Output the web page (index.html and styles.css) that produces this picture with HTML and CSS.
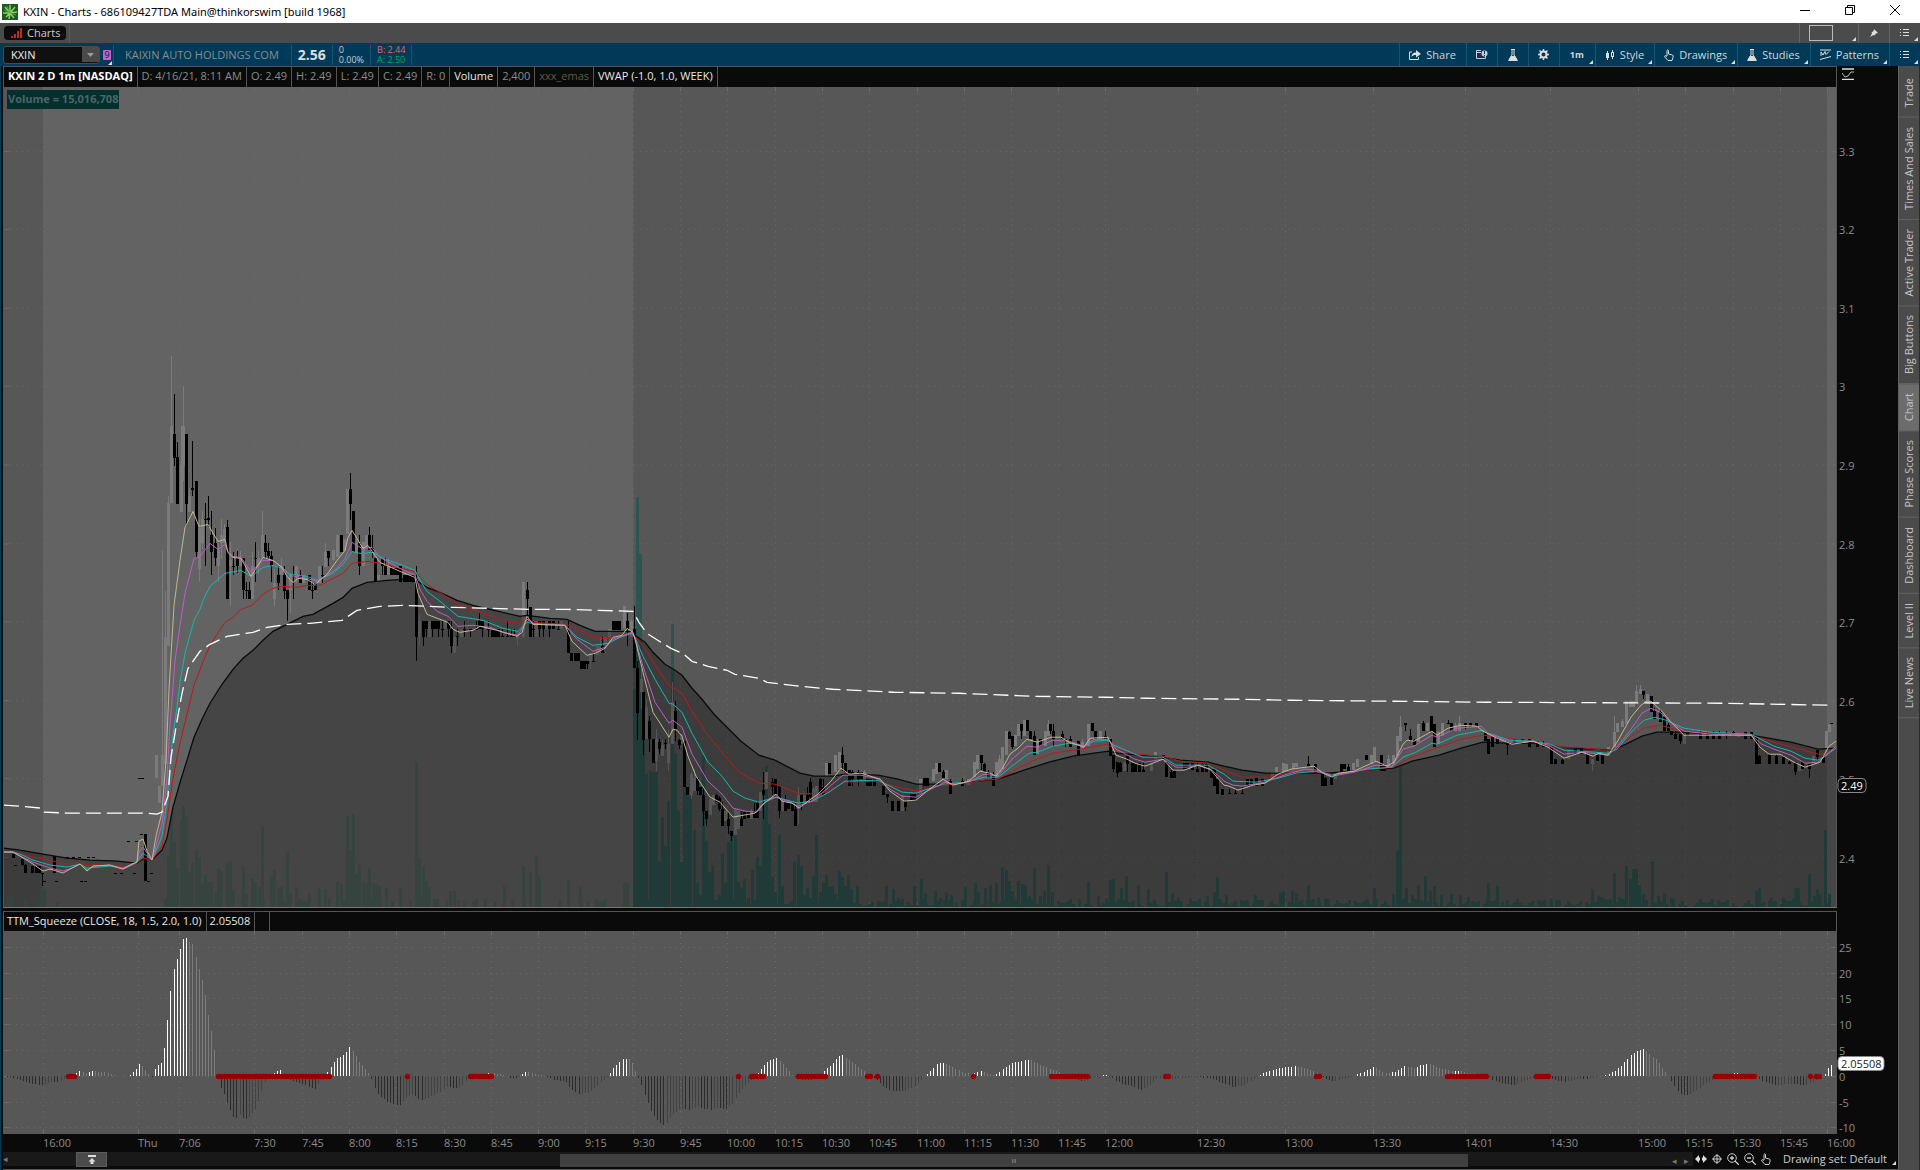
FILE: index.html
```html
<!DOCTYPE html>
<html lang="en">
<head>
<meta charset="utf-8">
<title>KXIN - Charts</title>
<link rel="stylesheet" href="styles.css">
</head>
<body>
<header class="titlebar">
	<svg class="app-icon" width="16" height="16" viewBox="0 0 16 16">
		<rect width="16" height="16" fill="#1c5a1e"/>
		<path d="M8 9L3 3M8 9L8 1M8 9L13 3M8 9L1 9M8 9L15 8M8 9L4 13M8 9L12 14M8 9L7 15" stroke="#8fd06a" stroke-width="1.5" fill="none"/>
		<path d="M8 9L5 2M8 9L14 11M8 9L2 6" stroke="#4da33f" stroke-width="1" fill="none"/>
	</svg>
	<h1>KXIN - Charts - 686109427TDA Main@thinkorswim [build 1968]</h1>
	<div class="winbtns">
		<button aria-label="Minimize"><svg width="10" height="10"><path d="M0 5.5H10" stroke="#000"/></svg></button>
		<button aria-label="Restore"><svg width="10" height="10"><path d="M.5 2.5H7.5V9.5H.5ZM2.5 2.5V.5H9.5V7.5H7.5" stroke="#000" fill="none"/></svg></button>
		<button aria-label="Close"><svg width="10" height="10"><path d="M0 0L10 10M10 0L0 10" stroke="#000"/></svg></button>
	</div>
</header>

<nav class="tabbar">
	<button class="tab">
		<svg width="11" height="10"><path d="M1 10V8M4 10V6M7 10V3M10 10V0" stroke="#c02a2a" stroke-width="2"/></svg>
		Charts
	</button>
	<span class="fill"></span>
	<button class="tb grid-btn corner" aria-label="Grid layout"><span class="layout-box"></span></button>
	<button class="tb pin-btn" aria-label="Pin"><svg width="8" height="8"><path d="M4 0L8 4L6 4.500L4.500 6.500L3.500 6L0 8L2 4.500L1.500 3.500L3.500 2Z" fill="#ddd"/></svg></button>
	<button class="tb menu-btn corner" aria-label="Menu"><svg width="9" height="8"><path d="M0 .5H1M3 .5H9M0 3.500H1M3 3.500H9M0 6.500H1M3 6.500H9" stroke="#ddd"/></svg></button>
</nav>

<section class="toolbar">
	<div class="symbol">
		<input type="text" value="KXIN" aria-label="Symbol">
		<button aria-label="Symbol list"><svg width="7" height="4"><path d="M0 0H7L3.500 4Z" fill="#999"/></svg></button>
	</div>
	<button class="link corner" aria-label="Link 9">9</button>
	<span class="company">KAIXIN AUTO HOLDINGS COM</span>
	<span class="last">2.56</span>
	<span class="two"><span>0</span><span>0.00%</span></span>
	<span class="two ba"><span class="bid">B: 2.44</span><span class="ask">A: 2.50</span></span>
	<span class="fill"></span>
	<button class="tb"><svg width="12" height="10"><path d="M3 2H.5V9.500H9.500V7" stroke="#ddd" fill="none"/><path d="M2.500 7C2.500 4 4 2.500 7 2.500V0L12 4L7 7.500V5C5 5 3.500 5.500 2.500 7Z" fill="#ddd"/></svg>Share</button>
	<button class="tb ico" aria-label="Detach"><svg width="12" height="9"><path d="M5 .5H.5V8.500H9.500V6M.5 2.500H5" stroke="#ccc" fill="none"/><circle cx="8.500" cy="3.500" r="3" fill="#ccc"/><path d="M8.500 1V4M8.500 5V6" stroke="#003a59"/></svg></button>
	<button class="tb ico" aria-label="Edit studies"><svg width="10" height="12"><path d="M3 .5H7M4 1V6L1 10.500H9L6 6V1" stroke="#ddd" fill="none"/><path d="M3 7H7L10 12H0Z" fill="#ddd"/></svg></button>
	<button class="tb ico" aria-label="Settings"><svg width="11" height="11"><circle cx="5.500" cy="5.500" r="3" stroke="#ddd" stroke-width="2" fill="none"/><path d="M5.500 0V2M5.500 9V11M0 5.500H2M9 5.500H11M1.500 1.500L3 3M8 8L9.500 9.500M9.500 1.500L8 3M3 8L1.500 9.500" stroke="#ddd" stroke-width="1.500"/></svg></button>
	<button class="tb tf corner">1m</button>
	<button class="tb corner"><svg width="10" height="10"><path d="M2.500 1V10M7.500 0V9" stroke="#ddd"/><rect x="1" y="3" width="3" height="5" fill="#ddd"/><rect x="6.500" y="2.500" width="2" height="4" fill="#003a59" stroke="#ddd"/></svg>Style</button>
	<button class="tb corner"><svg width="10" height="12" viewBox="0 0 10 12"><path d="M3 7V1.500Q3.500 .5 4.500 1.500V5L8.500 6Q9.500 6.500 9 8.500L8 11.500H4L.8 8Q.5 6.500 1.500 6.500L3 7.500" stroke="#ddd" fill="none"/></svg>Drawings</button>
	<button class="tb corner"><svg width="10" height="12"><path d="M3 .5H7M4 1V6L1 10.500H9L6 6V1" stroke="#ddd" fill="none"/><path d="M3 7H7L10 12H0Z" fill="#ddd"/></svg>Studies</button>
	<button class="tb corner"><svg width="11" height="11"><path d="M0 1H11M0 10.500L11 7.500M1 7V3L3 6L5 2.500L6 5.500L9 2.500" stroke="#ddd" fill="none"/></svg>Patterns</button>
	<button class="tb menu-btn corner" aria-label="Menu"><svg width="9" height="8"><path d="M0 .5H1M3 .5H9M0 3.500H1M3 3.500H9M0 6.500H1M3 6.500H9" stroke="#ddd"/></svg></button>
</section>

<main class="main">
	<div class="charts">
		<div class="row head">
			<div class="cells">
				<b>KXIN 2 D 1m [NASDAQ]</b>
				<span>D: 4/16/21, 8:11 AM</span>
				<span>O: 2.49</span>
				<span>H: 2.49</span>
				<span>L: 2.49</span>
				<span>C: 2.49</span>
				<span>R: 0</span>
				<span class="on">Volume</span>
				<span>2,400</span>
				<span class="emas">xxx_emas</span>
				<span class="on">VWAP (-1.0, 1.0, WEEK)</span>
			</div>
			<div class="axis">
				<svg class="scale-icon" width="12" height="12"><path d="M0 1H12M0 11.500H12" stroke="#ddd" stroke-width="1.500"/><path d="M0 5L3 9L6 8L9 4H12" stroke="#bbb" fill="none"/></svg>
			</div>
		</div>
		<div class="row price">
			<div class="plot">
				<svg id="priceChart" viewBox="4 87 1832 821" preserveAspectRatio="none"></svg>
				<span class="vol-label">Volume = 15,016,708</span>
			</div>
			<svg id="priceAxis" class="axis"></svg>
		</div>
		<div class="row head study-head">
			<div class="cells">
				<span class="on">TTM_Squeeze (CLOSE, 18, 1.5, 2.0, 1.0)</span>
				<span class="on">2.05508</span>
				<span class="blank"></span>
			</div>
			<div class="axis"></div>
		</div>
		<div class="row study">
			<div class="plot"><svg id="studyChart" viewBox="4 931 1832 203" preserveAspectRatio="none"></svg></div>
			<svg id="studyAxis" class="axis"></svg>
		</div>
		<div class="row times"><svg id="timeAxis"></svg><div class="axis"></div></div>
		<div class="bottom">
			<div class="track">
				<button class="arrow" aria-label="Scroll left">◂</button>
				<button class="to-top" aria-label="Collapse"><svg width="8" height="9"><path d="M0 1H8" stroke="#ddd" stroke-width="2"/><path d="M4 3L7.500 6.500H5.500V9H2.500V6.500H.5Z" fill="#ddd"/></svg></button>
				<div class="rail"><span></span><div class="thumb"><i></i></div><span class="arrows">◂ <em>▸</em></span></div>
			</div>
			<div class="tools">
				<button aria-label="Expand"><svg width="12" height="8"><path d="M0 4L4 0V2.500H5V5.500H4V8ZM12 4L8 0V2.500H7V5.500H8V8Z" fill="#ddd"/></svg></button>
				<button aria-label="Crosshair"><svg width="10" height="10"><circle cx="5" cy="5" r="3.500" stroke="#ccc" fill="none"/><path d="M5 0V10M0 5H10" stroke="#ccc"/></svg></button>
				<button aria-label="Zoom in"><svg width="12" height="12"><circle cx="5" cy="5" r="4.300" stroke="#ccc" fill="none"/><path d="M8 8L12 12M5 3V7M3 5H7" stroke="#ccc" stroke-width="1.300"/></svg></button>
				<button aria-label="Zoom out"><svg width="12" height="12"><circle cx="5" cy="5" r="4.300" stroke="#ccc" fill="none"/><path d="M8 8L12 12M3 5H7" stroke="#ccc" stroke-width="1.300"/></svg></button>
				<button aria-label="Pan"><svg width="10" height="12" viewBox="0 0 10 12"><path d="M3 7V1.500Q3.500 .5 4.500 1.500V5L8.500 6Q9.500 6.500 9 8.500L8 11.500H4L.8 8Q.5 6.500 1.500 6.500L3 7.500" stroke="#ccc" fill="none"/></svg></button>
				<button class="set corner">Drawing set: Default</button>
			</div>
		</div>
	</div>
	<aside class="gadgets">
		<button>Trade</button>
		<button>Times And Sales</button>
		<button>Active Trader</button>
		<button>Big Buttons</button>
		<button class="active">Chart</button>
		<button>Phase Scores</button>
		<button>Dashboard</button>
		<button>Level II</button>
		<button>Live News</button>
	</aside>
</main>
<script src="chart.js"></script>
</body>
</html>
```

FILE: styles.css
```css
* { box-sizing: border-box; }
body {
	margin: 0;
	height: 100vh;
	display: flex;
	flex-direction: column;
	overflow: hidden;
	background: #0a0a0a;
	color: #8c8c8c;
	font: 11px/16px "Open Sans", "Noto Sans", sans-serif;
}
button, input {
	margin: 0;
	padding: 0;
	border: 0;
	background: none;
	font: inherit;
	color: inherit;
}
button { cursor: pointer; white-space: nowrap; }
svg { display: block; flex: none; }
.fill { flex: 1; }

.titlebar {
	display: flex;
	align-items: center;
	height: 23px;
	flex: none;
	background: #fff;
	color: #000;
	padding: 0 3px 0 2px;
}
.titlebar h1 {
	margin: 0 auto 0 5px;
	font-family: "Noto Sans", "Open Sans", sans-serif;
	font-size: 11px;
	font-weight: normal;
}
.winbtns { display: flex; }
.winbtns button {
	width: 45px;
	height: 23px;
	display: flex;
	align-items: center;
	justify-content: center;
	padding-bottom: 3px;
}

.tabbar {
	display: flex;
	align-items: center;
	height: 20px;
	flex: none;
	background: #4b4b4b;
	padding-left: 4px;
	color: #ccc;
}
.tabbar .fill {
	align-self: stretch;
	margin-left: 3px;
	border-left: 1px solid #5a5a5a;
}
.tab {
	display: flex;
	align-items: center;
	gap: 5px;
	height: 14px;
	padding: 0 6px 0 7px;
	border-radius: 4px;
	background: #0c0c0c;
}
.tb {
	position: relative;
	display: flex;
	align-items: center;
	justify-content: center;
	gap: 5px;
	align-self: stretch;
	padding: 0 10px 0 9px;
	border-left: 1px solid #1c5373;
	color: #d4d4d4;
}
.tabbar .tb { border-color: #636363; }
.grid-btn { width: 59px; justify-content: flex-start; }
.layout-box { width: 24px; height: 16px; border: 1px solid #bbb; }
.pin-btn, .menu-btn { width: 31px; }
.ico { width: 31px; padding: 0; }
.tf { width: 36px; font-size: 9px; font-weight: bold; }
.corner { position: relative; }
.corner::after {
	content: "";
	position: absolute;
	right: 2px;
	bottom: 2px;
	border: 2px solid transparent;
	border-right-color: #ddd;
	border-bottom-color: #ddd;
}

.toolbar {
	display: flex;
	align-items: center;
	height: 23px;
	flex: none;
	padding: 0 0 0 3px;
	background: #003a59;
}
.symbol {
	display: flex;
	align-items: center;
	width: 97px;
	height: 18px;
	border: 1px solid #4a4a4a;
	border-radius: 3px;
	background: #101010;
	color: #eee;
}
.symbol input { flex: 1; min-width: 0; height: 14px; padding-left: 7px; }
.symbol button {
	display: flex;
	align-items: center;
	justify-content: center;
	width: 17px;
	height: 15px;
	background: #4a4a4a;
}
.link {
	width: 8px;
	height: 10px;
	margin: 0 2px 0 3px;
	border-radius: 1px;
	background: #c65fd0;
	color: #222;
	font-size: 9px;
	line-height: 10px;
}
.link::after { right: -1px; bottom: -5px; }
.company, .last, .two {
	display: flex;
	align-items: center;
	height: 20px;
	border-left: 1px solid #1c5373;
}
.company { padding: 0 12px 0 11px; }
.last { padding: 0 6px; color: #ddd; font-size: 14px; font-weight: bold; }
.two {
	flex-direction: column;
	align-items: flex-start;
	justify-content: center;
	padding: 0 6px;
	color: #ccc;
	font-size: 9px;
	line-height: 10px;
}
.ba { border-right: 1px solid #1c5373; }
.bid { color: #f0606a; }
.ask { color: #00b050; }

.main { flex: 1; min-height: 0; display: flex; border-left: 1px solid #003a59; }
.charts { flex: 1; min-width: 0; display: flex; flex-direction: column; padding-left: 2px; }
.row { display: flex; flex: none; }
.axis { width: 61px; flex: none; overflow: visible; }
.plot, .cells { flex: 1; min-width: 0; border: solid #555; border-width: 0 1px; }
.cells {
	display: flex;
	height: 20px;
	border-top-width: 1px;
}
.cells > * {
	padding: 1px 4px 0 3px;
	border-right: 1px solid #555;
	white-space: nowrap;
}
.head:first-child .cells { height: 21px; }
.head:first-child .cells > * { padding-left: 4px; }
.cells b { color: #fff; }
.cells .on { color: #e8e8e8; }
.cells .emas { color: #605b45; }
.cells .blank { width: 15px; }
.scale-icon { margin: 2px 0 0 5px; }
.price { flex: 821 1 0; min-height: 0; }
.study { flex: 203 1 0; min-height: 0; }
.plot { position: relative; }
.plot svg { width: 100%; height: 100%; }
.price .plot { border-bottom: 1px solid #777; }
.study-head { margin-top: 3px; }
.vol-label {
	position: absolute;
	left: 3px;
	top: 3px;
	padding: 1px 1px 2px;
	background: #03302e;
	color: #4d6663;
	font-weight: bold;
}
.axis text, #timeAxis text { fill: #8c8c8c; }
.axis text.lit { fill: #fff; }
.axis text.dark { fill: #222; }
.times { height: 18px; padding-left: 1px; }
#timeAxis { flex: 1; height: 18px; margin-right: 1px; overflow: visible; }

.bottom { display: flex; height: 18px; flex: none; padding-bottom: 3px; border-bottom: 1px solid #555; }
.track { display: flex; flex: 1; align-items: center; background: #191919; }
.arrow { width: 73px; text-align: left; font-size: 9px; color: #777; }
.to-top {
	display: flex;
	align-items: center;
	justify-content: center;
	width: 31px;
	height: 15px;
	border: 1px solid #5c5c5c;
	background: #4b4b4b;
}
.rail {
	flex: 1;
	display: grid;
	grid-template-columns: 453fr 908fr 225fr;
	height: 13px;
	align-items: center;
}
.thumb { display: flex; justify-content: center; align-items: center; height: 13px; background: #404040; }
.thumb i { width: 4px; height: 4px; border: 1px solid #707070; border-width: 0 1px; background: #5a5a5a; }
.arrows { justify-self: end; padding-right: 4px; font-size: 9px; color: #777; }
.arrows em { font-style: normal; margin-left: 5px; }
.tools { display: flex; align-items: center; gap: 5px; padding-left: 2px; color: #ccc; }
.set { margin-left: 7px; padding-right: 11px; }

.gadgets {
	display: flex;
	flex-direction: column;
	width: 22px;
	flex: none;
	padding-top: 3px;
	background: #4b4b4b;
	border-left: 1px solid #636363;
	border-right: 1px solid #003a59;
}
.gadgets button {
	writing-mode: vertical-rl;
	transform: rotate(180deg);
	padding: 9px 0;
	border-top: 1px solid #636363;
	line-height: 20px;
	color: #c4c4c4;
}
.gadgets .active { background: #6c6c6c; }
```

FILE: chart.js
```js
var NS = "http://www.w3.org/2000/svg";
function add(parent, tag, attrs, text) {
	var el = document.createElementNS(NS, tag);
	for (var k in attrs) el.setAttribute(k, attrs[k]);
	if (text) el.textContent = text;
	parent.appendChild(el);
	return el;
}
function byId(id) { return document.getElementById(id); }
function nums(s) { return s.trim().split(/[\s,]+/).map(Number); }
function pairs(s) {
	var n = nums(s), out = [];
	for (var i = 0; i < n.length; i += 2) out.push([n[i], n[i + 1]]);
	return out;
}
function rect(p, x, y, w, h, fill) {
	add(p, "rect", {x: x, y: y, width: w, height: h, fill: fill, "shape-rendering": "crispEdges"});
}

var times = [[43, "16:00"], [138, "Thu"], [179, "7:06"], [254, "7:30"], [302, "7:45"], [349, "8:00"], [396, "8:15"],
	[444, "8:30"], [491, "8:45"], [538, "9:00"], [585, "9:15"], [633, "9:30"], [680, "9:45"], [727, "10:00"],
	[775, "10:15"], [822, "10:30"], [869, "10:45"], [917, "11:00"], [964, "11:15"], [1011, "11:30"], [1058, "11:45"],
	[1105, "12:00"], [1197, "12:30"], [1285, "13:00"], [1373, "13:30"], [1465, "14:01"], [1550, "14:30"],
	[1638, "15:00"], [1685, "15:15"], [1733, "15:30"], [1780, "15:45"], [1827, "16:00"]];
var prices = [["3.3", 152], ["3.2", 230], ["3.1", 309], ["3", 387], ["2.9", 466], ["2.8", 545], ["2.7", 623], ["2.6", 702], ["2.5", 780], ["2.4", 859]];
var levels = [["25", 948], ["20", 974], ["15", 999], ["10", 1025], ["5", 1051], ["0", 1077], ["-5", 1103], ["-10", 1128]];

function grid(p, rows, top, bottom) {
	times.forEach(function (t) {
		add(p, "path", {d: "M" + (t[0] + .5) + " " + top + "V" + bottom, stroke: "#6c6c6c", "stroke-dasharray": "1 5"});
		add(p, "path", {d: "M" + (t[0] + .5) + " " + top + "v4M" + (t[0] + .5) + " " + bottom + "v-4", stroke: "#6c6c6c"});
	});
	rows.forEach(function (r) {
		add(p, "path", {d: "M4 " + (r[1] - .5) + "H1836", stroke: "#6a6a6a", "stroke-dasharray": "1 5"});
		add(p, "path", {d: "M4 " + (r[1] - .5) + "h5M1836 " + (r[1] - .5) + "h-5", stroke: "#6c6c6c"});
	});
}

/* moving averages, slowest first */
var slow = "4,849 20,851 43,855 67,859 90,861 117,862 137,864 145,859 152,861 162,851 167,839 173,808 181,780 187,761 194,738 202,720 210,704 222,685 233,670 243,659 253,651 263,641 273,632 287,625 303,617 313,615 333,604 343,598 352,589 367,583 387,581 403,580 415,580 427,588 440,593 457,601 473,606 490,610 507,614 520,617 527,616 550,619 567,620 580,626 595,632 613,632 630,632 635,636 645,643 653,653 665,665 675,671 682,676 692,689 702,700 714,715 726,727 741,742 759,756 775,761 800,774 814,777 833,777 845,775 878,776 898,780 916,785 939,785 955,785 969,783 998,780 1024,771 1049,763 1073,757 1094,754 1109,752 1118,754 1163,758 1180,761 1208,763 1224,767 1242,771 1265,774 1296,774 1327,774 1367,771 1394,769 1412,762 1439,756 1461,749 1483,743 1506,744 1541,744 1559,748 1591,750 1613,751 1626,745 1642,737 1657,733 1684,733 1716,735 1751,736 1774,740 1791,743 1818,750 1836,749";
var emas = [
	["#c01818", "4,853 13,853 33,858 50,861 63,865 80,864 87,866 110,866 127,868 137,864 143,859 152,861 162,847 167,820 173,779 180,744 187,715 194,686 202,665 210,646 217,635 225,623 233,618 241,610 252,606 263,595 273,589 283,587 297,588 307,586 320,586 333,579 343,574 352,564 367,562 383,564 400,569 415,572 427,585 443,595 460,606 477,612 493,617 508,623 520,624 527,620 533,623 565,625 580,631 595,639 608,639 620,636 632,633 635,637 647,652 659,672 669,686 682,694 692,712 708,736 722,753 739,773 759,784 775,785 798,794 820,795 837,787 845,783 878,782 894,787 916,792 943,786 967,784 984,781 998,780 1016,770 1037,760 1053,754 1086,749 1106,745 1114,749 1135,755 1163,757 1180,762 1208,764 1224,771 1242,778 1269,778 1287,774 1309,772 1332,775 1367,771 1392,768 1412,758 1439,748 1461,740 1483,736 1506,739 1532,742 1559,748 1577,748 1604,751 1615,750 1631,737 1644,729 1660,726 1675,730 1693,733 1751,736 1774,743 1796,749 1818,755 1827,754 1836,748"],
	["#14b8b4", "4,853 13,853 20,855 33,861 50,866 67,868 80,865 87,869 110,867 123,869 132,865 137,863 143,854 152,861 162,837 167,801 170,765 173,736 177,708 180,683 185,654 194,621 200,610 203,601 210,587 217,581 225,574 241,571 251,577 263,568 273,566 283,569 290,575 307,577 317,581 333,574 343,565 352,552 360,554 373,553 383,559 400,565 415,571 420,581 427,592 440,602 458,617 483,621 503,629 518,632 527,623 537,625 565,626 577,638 593,646 608,644 620,638 632,634 635,638 643,657 655,680 669,704 673,705 682,713 692,734 708,763 722,777 733,792 745,799 759,803 776,798 798,804 812,802 829,793 845,782 878,781 890,787 902,793 916,794 943,785 967,783 984,778 998,778 1012,767 1029,754 1037,753 1053,747 1069,744 1084,747 1094,742 1108,741 1114,746 1135,755 1143,758 1163,758 1176,766 1208,766 1224,775 1233,782 1256,783 1278,779 1296,774 1316,772 1332,776 1367,770 1392,768 1403,758 1416,753 1432,744 1437,745 1457,736 1483,731 1488,734 1510,741 1533,742 1550,745 1564,751 1595,753 1608,754 1617,750 1631,733 1644,721 1655,718 1666,721 1684,729 1711,733 1751,735 1774,747 1791,752 1805,759 1818,761 1825,757 1836,749"],
	["#c05cc8", "4,853 13,853 20,857 33,863 50,869 63,872 72,869 80,865 87,871 93,867 110,866 123,870 132,866 137,863 139,853 143,848 152,861 162,825 167,779 170,726 175,661 180,626 185,594 194,559 200,557 210,544 218,550 225,545 228,553 233,557 241,558 251,572 263,561 273,561 283,569 290,576 307,579 317,582 327,576 337,569 345,559 352,543 362,549 372,548 380,558 400,569 415,576 420,590 427,602 437,612 448,617 458,627 473,626 490,628 503,633 518,636 527,620 533,624 565,626 577,640 593,652 605,648 613,640 632,633 635,639 643,667 655,703 669,724 673,721 682,728 692,755 708,782 722,795 733,809 745,812 757,813 765,803 776,798 790,803 798,807 812,802 829,788 843,776 861,776 880,780 890,790 902,797 916,798 927,792 945,783 955,785 971,782 984,775 998,777 1012,760 1027,747 1037,748 1053,741 1069,742 1084,747 1094,740 1108,740 1116,750 1135,760 1145,763 1163,760 1176,768 1188,768 1198,766 1212,771 1224,782 1233,786 1242,787 1265,783 1287,775 1305,770 1318,771 1332,777 1354,773 1376,766 1392,767 1403,750 1414,747 1432,736 1437,738 1457,729 1481,727 1488,734 1510,743 1533,742 1548,746 1564,755 1582,753 1608,756 1617,748 1631,730 1642,714 1651,709 1660,713 1671,723 1684,732 1711,735 1751,736 1762,745 1774,750 1791,756 1805,764 1818,763 1825,757 1836,747"],
	["#c3b98c", "4,853 13,853 20,857 33,865 43,872 50,870 63,874 72,869 80,865 87,872 93,867 110,866 123,870 132,865 137,863 139,842 143,840 147,852 152,861 156,837 162,813 166,761 169,690 174,606 180,561 185,528 193,512 199,527 208,525 218,542 225,540 228,553 233,558 241,559 251,577 263,558 273,561 282,568 287,577 293,583 298,579 307,580 315,585 327,575 337,561 345,551 348,538 352,531 357,539 363,549 368,546 375,556 380,563 400,572 415,578 418,594 427,615 440,620 448,623 453,630 460,633 473,631 480,627 497,631 517,637 522,633 527,617 533,625 565,626 572,642 587,656 595,654 605,649 613,638 622,636 627,629 633,633 635,640 643,673 653,713 669,738 673,730 677,731 682,737 688,757 696,777 710,798 720,803 733,818 755,814 763,805 776,795 782,802 792,804 799,809 808,802 818,795 831,782 841,769 849,775 861,774 880,780 890,792 904,802 916,801 927,792 943,780 953,786 969,782 980,772 990,774 996,777 1002,770 1010,755 1018,749 1027,740 1037,743 1051,738 1061,738 1069,743 1084,748 1090,739 1108,738 1116,756 1127,760 1135,764 1145,767 1163,760 1173,771 1184,771 1198,766 1210,770 1216,777 1224,786 1229,787 1238,791 1253,786 1265,784 1278,775 1291,770 1314,767 1323,774 1332,778 1338,774 1354,772 1376,762 1387,767 1394,763 1403,745 1407,741 1414,742 1432,732 1437,736 1448,729 1461,726 1477,727 1483,732 1497,739 1512,745 1533,742 1548,748 1564,759 1582,753 1593,757 1599,754 1608,756 1617,743 1631,718 1640,707 1646,702 1651,702 1662,712 1671,723 1684,736 1711,736 1751,736 1760,748 1769,755 1780,755 1794,763 1805,768 1820,763 1829,747 1836,742"]
];
var vwap = "4,806 20,807 41,809 44,813 67,814 147,814 157,815 162,813 168,797 171,758 177,722 182,694 188,669 200,652 210,645 227,637 253,633 267,628 287,625 310,624 342,621 357,611 380,607 403,606 453,608 530,610 567,610 633,612 639,623 647,634 661,643 671,649 684,655 692,662 708,667 727,671 735,675 759,679 767,683 784,685 800,687 833,690 894,693 959,694 1033,697 1106,698 1147,699 1240,700 1291,701 1394,702 1488,703 1722,704 1832,706";

/* x high top bottom low */
var down = [
	"13 855 855 859 859, 22 860 860 866 867, 25 865 866 874 874, 32 867 867 874 874, 36 867 867 874 874, 39 867 867 874 874, 42 874 874 875 887, 54 857 857 874 874, 145 835 835 882 882",
	"174 394 434 458 466, 177 442 457 505 505, 186 434 434 505 527, 192 441 488 490 496, 196 481 481 553 559, 205 504 520 521 567, 208 496 519 521 528, 211 512 536 553 576, 215 529 544 559 567, 227 521 528 600 600, 233 553 567 568 576, 237 552 559 567 574, 243 559 559 591 600, 246 583 591 592 600, 249 583 591 600 600, 255 543 559 560 583, 265 536 544 553 560, 268 544 552 557 560, 271 552 557 567 583, 278 567 576 584 591, 284 567 576 592 600, 287 591 591 600 622, 293 567 576 577 600, 300 571 576 584 584, 309 576 576 591 591, 312 583 591 592 600, 315 584 584 591 591, 322 567 576 577 584, 328 552 552 559 567, 341 536 536 553 553, 350 473 489 505 521, 353 512 512 553 553, 359 536 544 567 576, 369 528 536 551 551, 372 536 549 553 559, 375 559 559 583 583, 382 559 559 567 576, 385 559 567 576 576, 391 567 569 576 576, 394 569 569 576 576, 397 569 569 576 576, 400 567 567 583 583, 404 576 576 583 583, 407 576 576 583 583, 410 576 576 583 583, 413 576 576 583 583, 416 567 580 638 662",
	"423 622 622 638 647, 426 622 622 630 638, 432 622 622 630 638, 435 622 622 630 630, 438 622 622 630 638, 442 622 630 631 638, 448 622 622 630 638, 451 622 630 647 654, 457 630 637 638 647, 464 622 630 631 638, 470 630 630 631 638, 476 622 630 631 631, 479 614 622 630 630, 482 622 622 630 638, 488 622 630 631 638, 492 630 630 638 638, 495 630 630 638 638, 498 630 630 638 638, 502 630 637 638 638, 507 622 637 638 638, 511 630 637 638 638, 514 630 637 638 638, 527 583 591 600 622, 530 608 608 638 638, 533 622 630 631 638, 539 622 622 630 638, 543 622 622 630 638, 549 622 622 630 638, 553 622 622 630 630, 558 622 630 631 631, 568 622 630 654 654, 571 654 654 662 662, 575 654 654 662 662, 578 654 654 662 662, 581 662 662 670 670, 584 662 662 670 670, 587 662 662 665 670, 593 654 662 663 663, 602 638 647 654 654, 613 622 622 631 631, 616 622 622 631 631, 619 622 622 631 631, 627 614 622 630 647, 634 607 630 669 669",
	"637 662 669 714 741, 643 693 693 741 756, 649 717 722 740 753, 653 740 740 764 764, 659 740 743 750 755, 665 740 744 745 750, 675 702 712 730 742, 679 740 741 746 750, 684 742 742 788 788, 687 788 788 796 796, 697 779 779 792 796, 700 788 788 796 796, 703 788 796 812 827, 706 812 812 820 827, 716 795 796 803 803, 719 797 799 810 812, 722 803 810 827 827, 728 812 820 827 835, 731 832 832 837 842, 741 812 820 827 827, 744 812 813 820 820, 748 812 812 819 819, 754 804 812 819 819, 757 802 804 819 819, 763 773 791 796 820, 772 779 783 788 796, 775 780 780 795 795, 779 787 787 812 819, 785 796 803 812 812, 788 804 804 810 810, 792 804 804 812 812, 795 804 810 827 827, 801 796 796 803 811, 807 788 796 804 804, 810 779 783 798 803, 820 779 780 795 795, 823 780 788 796 796, 829 764 764 775 775, 842 748 756 764 772, 845 764 764 773 773, 849 771 771 787 787, 852 771 773 780 787, 858 771 773 780 787, 861 773 773 780 780, 867 780 780 787 787, 870 780 780 787 787, 874 780 780 787 787, 883 787 787 796 796, 887 795 795 798 804, 892 802 802 812 812, 898 802 802 812 812, 905 802 802 808 812, 911 795 795 802 802, 914 795 795 802 802, 924 779 779 787 787, 927 779 779 787 787, 939 764 764 773 773, 943 771 773 779 779, 950 780 782 795 795, 962 779 782 787 787, 981 756 756 764 771, 984 764 765 773 773, 988 771 773 779 779, 993 773 777 787 787",
	"1009 732 733 740 740, 1012 737 737 748 750, 1021 725 725 732 740, 1027 721 721 732 732, 1030 732 732 740 740, 1034 732 737 756 756, 1040 740 740 747 747, 1050 725 725 732 735, 1053 725 732 740 748, 1062 732 735 740 740, 1065 740 740 742 748, 1070 737 740 748 748, 1078 742 742 757 757, 1092 724 724 732 732, 1095 732 732 740 740, 1105 732 737 740 740, 1110 740 740 757 757, 1113 756 756 770 773, 1117 763 763 774 778, 1120 763 764 773 773, 1127 756 757 765 773, 1132 764 764 773 773, 1135 764 764 773 773, 1139 764 764 773 773, 1143 764 771 773 773, 1163 756 756 760 760, 1166 763 763 778 778, 1171 771 773 779 779, 1174 771 771 779 779, 1184 764 764 770 770, 1187 764 764 770 770, 1192 764 764 771 771, 1197 764 770 773 773, 1202 764 765 773 773, 1206 764 765 773 773, 1211 770 770 779 779, 1214 770 770 787 787, 1217 780 780 795 795, 1222 790 790 796 796, 1229 790 794 795 795, 1235 790 794 795 795, 1242 788 794 795 795, 1247 780 780 787 787, 1251 780 780 787 787, 1256 779 779 787 787, 1262 780 780 787 787",
	"1308 757 765 768 768, 1315 765 765 774 774, 1322 773 773 787 787, 1325 778 779 787 787, 1331 774 774 786 786, 1341 765 765 773 773, 1344 765 765 770 770, 1348 765 768 773 773, 1366 756 756 761 761, 1381 756 756 772 772, 1384 765 766 772 772, 1405 724 724 726 732, 1410 730 737 742 742, 1414 740 741 746 746, 1423 722 724 732 732, 1431 717 717 733 733, 1434 725 725 748 748, 1448 721 724 725 725, 1451 724 724 732 732, 1465 724 724 727 730, 1470 724 724 728 728, 1476 724 724 728 728, 1485 732 732 742 742, 1488 740 740 755 755, 1492 737 737 748 748, 1497 737 737 745 745, 1507 742 742 746 756, 1514 740 740 745 745, 1522 740 740 745 745, 1529 740 740 748 748, 1537 742 742 748 748, 1543 742 744 748 748, 1551 748 748 765 765, 1555 760 760 765 765, 1562 760 761 765 765, 1575 750 750 755 755, 1581 750 750 755 755, 1587 755 755 765 765, 1597 755 755 762 762, 1602 755 755 765 765, 1643 692 692 696 700, 1651 697 697 713 713, 1654 709 712 720 720, 1660 710 713 723 723, 1664 718 718 732 732, 1668 724 726 732 732, 1671 732 732 736 736, 1675 732 735 740 740, 1680 735 735 742 745, 1687 732 732 737 737, 1700 732 734 740 740, 1707 732 734 740 740, 1713 732 734 740 740, 1719 732 734 740 740, 1726 732 734 737 740, 1733 732 733 737 737, 1745 733 733 740 740, 1751 733 733 740 740, 1756 737 737 765 765, 1759 756 757 765 765, 1769 755 755 765 765, 1776 755 757 765 765, 1783 756 758 765 765, 1789 762 763 765 765, 1795 763 763 773 776, 1802 763 763 770 770, 1809 765 765 770 779, 1817 751 751 758 762, 1823 756 757 764 764"
].join(",");
var up = [
	"156 756 756 779 779, 159 787 787 804 804, 162 552 756 787 787, 165 592 638 765 765, 168 496 504 647 647, 171 356 426 504 504, 181 426 465 513 513, 183 386 426 466 481, 189 488 496 513 513, 199 521 529 570 583, 202 512 520 544 550, 218 544 551 567 583, 221 520 536 544 560, 224 525 530 544 544, 230 543 561 567 607, 240 552 560 567 567, 252 553 567 600 600, 258 552 559 567 575, 262 512 536 559 559, 274 570 584 600 607, 281 559 567 576 576, 290 576 576 592 614, 296 567 567 576 584, 303 576 576 584 584, 319 567 567 584 584, 325 544 553 568 568, 333 551 551 561 561, 337 536 536 558 558, 344 540 540 552 552, 347 489 489 535 535, 356 540 543 553 553, 363 543 543 567 567, 366 536 536 547 547, 378 576 576 583 583, 388 559 567 576 576, 419 615 622 638 647, 429 622 622 638 638, 445 622 622 630 630, 454 638 638 654 654, 461 630 630 638 638, 485 622 624 630 630, 517 633 633 640 647, 523 583 583 638 638, 536 622 622 638 638, 546 622 622 630 630, 561 622 622 630 630, 590 654 654 662 670, 597 647 647 656 656, 600 638 647 654 654, 605 638 638 645 650, 609 630 630 638 645, 624 607 607 629 629, 631 620 622 638 638",
	"641 670 680 693 710, 646 700 708 740 740, 656 730 740 762 772, 662 740 746 757 757, 668 731 745 764 772, 672 683 703 745 745, 681 735 735 745 745, 691 773 775 796 800, 694 770 779 792 792, 710 800 800 816 816, 713 796 796 806 806, 725 812 812 822 822, 735 810 810 836 836, 738 812 812 830 830, 751 810 812 820 820, 760 793 793 812 812, 766 773 773 790 790, 782 800 800 812 812, 798 788 796 810 825, 804 796 796 803 803, 813 788 790 803 803, 816 787 787 803 803, 826 764 764 777 777, 835 756 756 773 773, 839 753 753 770 770, 864 771 773 780 780, 902 796 796 812 812, 920 780 780 795 795, 933 770 770 782 782, 936 764 764 775 775, 946 771 771 780 780, 968 780 780 786 786, 974 763 763 778 778, 977 756 756 770 770, 996 763 763 777 777, 999 756 760 773 773, 1002 748 748 770 770, 1006 732 732 756 756, 1015 736 736 747 747, 1018 725 725 737 737, 1024 721 721 737 737, 1037 740 743 755 755, 1045 732 732 747 747, 1048 721 725 737 737, 1082 740 743 750 750, 1088 725 725 747 747, 1100 732 732 740 740, 1124 763 763 772 772, 1151 764 764 772 772, 1155 753 753 760 760",
	"1272 773 773 780 780, 1276 768 768 777 777, 1283 764 764 774 774, 1286 765 765 772 772, 1293 764 764 770 770, 1296 764 764 768 768, 1335 773 773 780 780, 1353 764 764 773 773, 1357 760 760 768 768, 1371 756 756 765 765, 1374 748 748 762 762, 1388 756 760 768 768, 1393 756 756 765 765, 1397 737 737 757 757, 1400 717 728 742 742, 1418 725 725 743 743, 1427 724 724 732 732, 1438 732 733 745 745, 1442 724 724 737 737, 1455 724 727 732 732, 1459 717 724 732 732, 1568 752 752 760 760, 1592 760 760 765 772, 1608 748 748 757 757, 1614 717 733 748 748, 1617 724 724 733 733, 1622 720 722 728 728, 1626 702 702 725 725, 1630 702 702 708 708, 1633 702 702 708 708, 1636 686 692 703 703, 1640 686 690 695 695, 1647 695 695 702 702, 1684 736 736 745 745, 1738 734 734 738 738, 1799 765 765 772 772, 1813 757 757 764 764, 1826 732 732 757 757, 1829 725 725 733 733"
].join(",");
/* bars with no range: x y */
var dashes = "15,866 44,882 56,882 67,858 73,858 79,858 88,858 81,882 85,882 115,874 121,874 134,874 128,842 136,842 141,835 148,882 151,874 93,858 139,779 142,779 1831,724";

/* volume bars: x, top */
var preVol = "8,898 11,897 25,900 37,903 41,874 44,890 57,903 165,900 168,856 171,815 174,842 177,869 181,822 183,807 186,817 189,873 192,864 196,850 199,858 202,885 205,876 208,883 211,883 215,894 218,869 221,872 227,864 230,862 233,892 243,868 246,895 252,880 255,883 259,888 262,828 271,877 274,871 278,889 281,888 287,853 290,894 296,889 309,894 319,890 325,890 337,883 341,885 347,817 350,851 353,814 356,875 359,866 363,883 366,884 369,869 373,884 376,885 379,887 386,889 400,888 416,763 419,858 423,867 426,882 429,888 450,892 454,892 504,886 523,867 530,873 536,856 539,878 568,880 580,888 624,884 627,884";
var regVol = "634,690 637,497 640,555 643,740 646,775 650,772 653,773 656,773 659,862 662,818 665,847 668,802 672,625 675,754 678,812 681,863 684,767 687,797 690,797 694,831 697,884 700,896 703,757 706,842 709,873 712,866 716,903 719,896 722,854 725,884 728,843 731,835 735,836 738,883 741,889 744,880 748,899 752,871 757,858 760,867 763,805 766,767 769,825 772,878 775,893 779,836 782,887 785,905 794,862 798,856 801,867 804,896 807,889 810,899 813,877 816,836 820,893 823,884 826,876 829,888 832,887 835,895 839,872 842,878 845,887 848,876 851,890 857,887 886,887 893,890 898,899 914,887 921,880 925,894 935,892 940,899 946,893 951,896 965,888 975,884 978,893 985,889 990,886 996,884 1002,868 1006,871 1009,882 1012,892 1018,882 1022,885 1025,886 1029,897 1034,869 1040,897 1044,892 1048,866 1052,893 1088,883 1098,897 1110,881 1113,880 1121,889 1126,877 1138,886 1148,890 1166,873 1172,894 1178,899 1207,897 1214,893 1217,878 1226,896 1241,901 1255,896 1258,901 1280,894 1283,892 1292,892 1296,894 1308,886 1318,898 1374,889 1393,895 1397,852 1400,768 1406,889 1412,896 1418,886 1425,877 1430,892 1434,887 1441,896 1451,895 1460,896 1468,898 1488,884 1497,887 1507,901 1551,900 1592,890 1598,897 1601,898 1614,874 1619,898 1626,867 1630,880 1633,870 1636,870 1639,886 1643,895 1652,862 1658,897 1664,894 1671,899 1712,901 1756,892 1759,889 1771,899 1783,899 1795,889 1798,889 1809,875 1814,897 1817,890 1820,895 1825,831 1829,895";

function candles(p, list, color) {
	var n = nums(list);
	for (var i = 0; i < n.length; i += 5) {
		rect(p, n[i], n[i + 1], 1, Math.max(1, n[i + 4] - n[i + 1]), color);
		rect(p, n[i] - 1, n[i + 2], 3, Math.max(1, n[i + 3] - n[i + 2]), color);
	}
}

var pc = byId("priceChart");
rect(pc, 4, 87, 1832, 821, "#575757");
rect(pc, 43, 87, 590, 821, "#636363");
rect(pc, 1827, 87, 9, 821, "#636363");
grid(pc, prices, 87, 908);
pairs(preVol).forEach(function (v) { rect(pc, v[0] - 1, v[1], 3, 908 - v[1], "#4f605b"); });
pairs(regVol).forEach(function (v) { rect(pc, v[0] - 1, v[1], 3, 908 - v[1], "#2f5450"); });
for (var i = 0, x = 184; x < 1826; x += 3, i++) {
	var h = (i * 7 + i * i % 11) % 9;
	if (x > 633 || h > 5) rect(pc, x, 908 - h, 3, h, x < 633 ? "#4f605b" : "#2f5450");
}
candles(pc, up, "#7b7b7b");
add(pc, "path", {d: "M4 908L" + slow.replace(/ /g, "L") + "V908Z", fill: "#000", "fill-opacity": .3});
candles(pc, down, "#000");
pairs(dashes).forEach(function (d) { rect(pc, d[0] - 1, d[1], 3, 1, "#000"); });
add(pc, "polyline", {points: slow, fill: "none", stroke: "#0a0a0a", "stroke-width": 1.3});
emas.forEach(function (e) {
	add(pc, "polyline", {points: e[1], fill: "none", stroke: e[0], "stroke-width": 1});
});
add(pc, "polyline", {points: vwap, fill: "none", stroke: "#fff", "stroke-width": 1.3, "stroke-dasharray": "15 6"});

/* TTM squeeze momentum: x, height */
var squeeze = pairs("4,0 10,-1 20,-4 33,-8 43,-9 50,-6 57,-6 65,-3 70,0 76,3 79,5 82,4 86,3 92,5 103,4 111,2 118,0 128,0 131,2 135,5 138,12 142,10 146,5 149,0 151,-4 154,6 158,11 161,13 164,28 167,56 170,85 173,104 176,113 179,124 183,137 186,138 189,134 192,132 195,123 198,110 202,96 205,81 208,61 211,45 214,26 217,5 220,-10 224,-18 227,-27 233,-41 236,-42 239,-38 242,-41 246,-43 250,-40 255,-33 258,-25 261,-15 265,-6 268,0 274,3 280,6 283,1 290,-4 303,-8 310,-12 315,-13 320,-5 325,0 328,6 331,9 337,18 344,21 347,26 350,30 353,25 359,14 365,7 369,1 372,-5 378,-18 387,-26 392,-28 400,-29 405,-22 413,-18 419,-24 425,-23 440,-16 447,-11 458,-12 466,-5 472,0 488,3 500,2 510,-2 518,-2 523,3 526,5 530,3 538,1 545,0 554,-4 565,-5 570,-12 577,-18 588,-17 598,-9 608,0 611,5 614,9 624,18 631,16 634,8 637,0 640,-6 646,-22 652,-38 660,-47 665,-50 672,-39 680,-32 688,-34 697,-31 710,-34 718,-32 726,-33 733,-27 740,-15 750,-5 756,0 760,6 767,14 772,17 776,18 782,13 788,6 792,1 800,-4 812,-4 818,0 823,4 832,12 838,20 842,21 850,15 860,8 868,1 877,-4 885,-12 893,-15 904,-15 916,-10 923,-1 927,2 933,8 938,13 945,13 955,7 963,4 970,2 980,5 987,3 994,1 1000,5 1010,12 1020,15 1030,16 1040,11 1048,8 1058,4 1068,0 1080,-5 1088,-4 1095,-1 1100,0 1105,2 1108,0 1113,-3 1120,-7 1130,-10 1141,-14 1150,-9 1157,-2 1170,-3 1195,-1 1210,-2 1220,-6 1233,-11 1242,-10 1252,-4 1258,0 1268,5 1280,8 1295,10 1305,8 1315,4 1322,-1 1332,-5 1345,-3 1353,0 1358,2 1366,5 1374,9 1382,4 1388,3 1395,4 1402,9 1405,10 1409,9 1415,8 1420,11 1429,12 1440,8 1450,5 1460,5 1468,3 1480,2 1488,0 1492,-4 1502,-7 1513,-9 1522,-6 1532,-2 1540,0 1551,-3 1565,-6 1578,-3 1588,-3 1598,0 1607,1 1613,4 1620,9 1626,16 1632,22 1639,26 1643,27 1648,23 1655,18 1663,7 1668,0 1674,-10 1680,-18 1686,-20 1695,-15 1705,-8 1715,-2 1730,2 1737,3 1748,1 1757,-2 1765,-6 1775,-9 1790,-8 1805,-9 1815,-5 1822,0 1825,2 1828,8 1832,12");
var dots = [[68, 76], [218, 330], [407, 407], [470, 493], [738, 738], [751, 764], [798, 825], [867, 872], [877, 877], [973, 975], [1051, 1088], [1165, 1168], [1316, 1319], [1447, 1486], [1536, 1549], [1715, 1754], [1810, 1810], [1816, 1820]];

var sc = byId("studyChart");
rect(sc, 4, 931, 1832, 203, "#575757");
grid(sc, levels, 931, 1134);
function valueAt(x) {
	for (var i = 1; i < squeeze.length; i++) {
		var a = squeeze[i - 1], b = squeeze[i];
		if (x <= b[0]) return a[1] + (b[1] - a[1]) * (x - a[0]) / (b[0] - a[0]);
	}
	return 12;
}
var prev = 0;
for (var bar = 0; bar < 583; bar++) {
	var bx = Math.round(4 + bar * 3.14), v = valueAt(bx), len = Math.round(Math.abs(v));
	var color = v > 0 ? (v >= prev ? "#fff" : "#7c7c7c") : (v <= prev ? "#2b2b2b" : "#424242");
	if (len) rect(sc, bx, v > 0 ? 1076 - len : 1076, 1, len, color);
	prev = v;
}
dots.forEach(function (d) {
	for (var x = d[0]; x <= d[1]; x += 3) add(sc, "circle", {cx: x + .5, cy: 1076.5, r: 2.7, fill: "#980000"});
});

/* axis labels */
function label(svg, x, y, text, cls) {
	var g = add(svg, "svg", {x: x, y: y, overflow: "visible"});
	if (cls) add(g, "rect", {x: 1, y: -7.5, width: cls == "lit" ? 28 : 46, height: 14, rx: 4,
		fill: cls == "lit" ? "#0a0a0a" : "#fff", stroke: "#888"});
	add(g, "text", {x: cls ? 4 : 2, y: 4, "class": cls || ""}, text);
}
var pa = byId("priceAxis"), sa = byId("studyAxis"), ta = byId("timeAxis");
prices.forEach(function (p) { label(pa, 0, (p[1] - 87) / 8.21 + "%", p[0]); });
label(pa, 0, (786 - 87) / 8.21 + "%", "2.49", "lit");
levels.forEach(function (l) { label(sa, 0, (l[1] - 931) / 2.03 + "%", l[0]); });
label(sa, 0, (1064 - 931) / 2.03 + "%", "2.05508", "dark");
times.forEach(function (t) {
	add(ta, "text", {x: (t[0] - 4) / 18.32 + "%", y: 13}, t[1]);
});
```
